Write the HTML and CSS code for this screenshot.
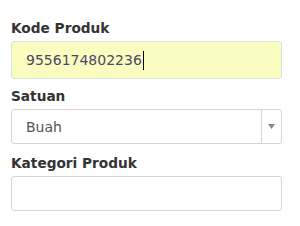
FILE: index.html
```html
<!DOCTYPE html>
<html lang="id">
<head>
  <meta charset="UTF-8" />
  <title>Produk</title>
  <link rel="stylesheet" href="styles.css">
</head>
<body>
  <form class="form">
    <div class="group">
      <label class="label">Kode Produk</label>
      <div class="control focus"><span class="value">9556174802236</span><span class="caret"></span></div>
    </div>
    <div class="group">
      <label class="label">Satuan</label>
      <div class="control select">
        <span class="value light">Buah</span>
        <span class="arrow"><svg width="7" height="5" viewBox="0 0 7 5"><path d="M0 0H7L3.5 5Z" fill="#888"/></svg></span>
      </div>
    </div>
    <div class="group">
      <label class="label">Kategori Produk</label>
      <div class="control"></div>
    </div>
  </form>
</body>
</html>
```

FILE: styles.css
```css
body {
  margin: 0;
  background: #fff;
  font-family: "DejaVu Sans", sans-serif;
}
.form {
  padding: 21px 0 0 11px;
  width: 271px;
}
.group {
  margin-bottom: 12px;
}
.group:first-child {
  margin-bottom: 10px;
}
.label {
  display: block;
  font-size: 13.7px;
  font-weight: bold;
  color: #333;
  margin-bottom: 5px;
  line-height: 15px;
}
.control {
  display: flex;
  align-items: center;
  height: 35px;
  box-sizing: border-box;
  border: 1px solid #d6d6d6;
  border-radius: 3px;
  padding-left: 14px;
  background: #fff;
}
.control.focus {
  height: 38px;
  background: #fbfcbf;
  border-color: #d9e2d9;
}
.value {
  font-size: 14px;
  color: #4a4866;
}
.value.light {
  color: #555;
}
.caret {
  display: inline-block;
  width: 1px;
  height: 19px;
  background: #000;
  margin-left: 1px;
}
.select {
  padding-right: 0;
}
.select .value {
  flex: 1;
}
.arrow {
  width: 19px;
  height: 100%;
  border-left: 1px solid #d6d6d6;
  display: flex;
  align-items: center;
  justify-content: center;
}
```
